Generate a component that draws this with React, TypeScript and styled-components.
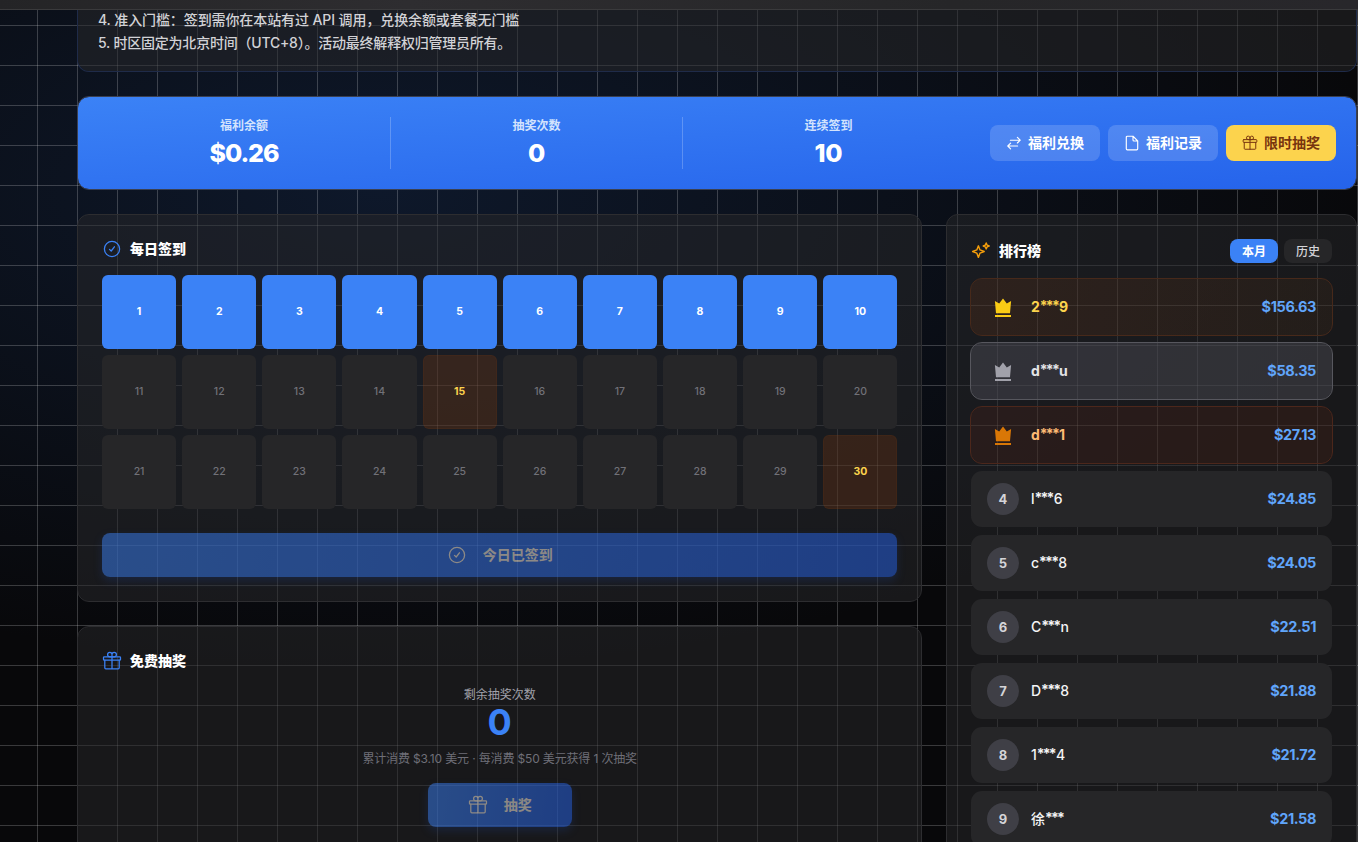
import React from "react";
import styled, { createGlobalStyle, css } from "styled-components";

const Global = createGlobalStyle`
  * { box-sizing: border-box; }
  html, body { margin: 0; height: 100%; overflow: hidden; background: #08080a; }
  body { font-family: Inter, "Noto Sans CJK SC", sans-serif; color: #fff; -webkit-font-smoothing: antialiased; }
  button { font-family: inherit; border: 0; margin: 0; }
`;

const Page = styled.div`
  width: 1358px;
  height: 842px;
  overflow: hidden;
  display: flex;
  flex-direction: column;
  background:
    linear-gradient(90deg, rgba(255, 255, 255, 0.2) 1px, transparent 1px) 37px 0 / 40px 40px,
    linear-gradient(rgba(255, 255, 255, 0.2) 1px, transparent 1px) 0 25px / 40px 40px,
    radial-gradient(ellipse 1000px 480px at 380px 190px, rgba(25, 55, 105, 0.34), transparent 100%),
    #08080a;
`;

const TopBar = styled.header`
  flex: none;
  height: 10px;
  background: linear-gradient(90deg, #242426, #2e2d30 30%, #262628 70%, #28272b);
  border-bottom: 1px solid #3a3a3c;
`;

const Content = styled.main`
  flex: none;
  width: 1280px;
  margin-left: 77px;
  display: flex;
  flex-direction: column;
  gap: 24px;
`;

const cardSurface = css`
  background: rgba(40, 40, 42, 0.53) padding-box;
  border: 1px solid #2d2d30;
  border-radius: 12px;
`;

const Notice = styled.section`
  ${cardSurface}
  height: 62px;
  border-color: #1f2b49;
  border-top: 0;
  border-radius: 0 0 12px 12px;
  padding: 0 20px;
  font-size: 14px;
  line-height: 23.2px;
  font-weight: 500;
  color: #d2d2d6;
`;

const NoticeLine = styled.div<{ $spacing: string }>`
  letter-spacing: ${(p) => p.$spacing};
  white-space: nowrap;
  &:first-child { margin-top: -2px; }
`;

const Hero = styled.section`
  height: 94px;
  border-radius: 12px;
  border: 1px solid #3a4052;
  background: linear-gradient(176deg, #3b82f6, #2563eb) padding-box;
  display: flex;
  align-items: center;
  padding: 0 20px;
`;

const Stats = styled.div`
  display: flex;
`;

const Stat = styled.div`
  flex: 0 0 292px;
  height: 52px;
  display: flex;
  flex-direction: column;
  align-items: center;
  & + & { border-left: 1px solid rgba(255, 255, 255, 0.22); }
`;

const StatLabel = styled.div`
  font-size: 12px;
  line-height: 17px;
  font-weight: 600;
  color: #d3e3fd;
`;

const StatValue = styled.div<{ $tight: boolean }>`
  font-size: 25px;
  line-height: 32px;
  font-weight: 800;
  margin-top: 3px;
  letter-spacing: ${(p) => (p.$tight ? "-1.1px" : "-0.2px")};
`;

const HeroActions = styled.div`
  display: flex;
  gap: 8px;
  margin-left: auto;
`;

const Label = styled.span`
  padding-bottom: 2px;
`;

const HeroButton = styled.button<{ $gold?: boolean }>`
  width: 110px;
  height: 36px;
  border-radius: 8px;
  padding: 0;
  display: flex;
  align-items: center;
  justify-content: center;
  gap: 6px;
  font-size: 14px;
  font-weight: 700;
  background: ${(p) => (p.$gold ? "#fcd34d" : "rgba(255, 255, 255, 0.16)")};
  color: ${(p) => (p.$gold ? "#78350f" : "#fff")};
`;

const Columns = styled.div`
  display: flex;
  justify-content: space-between;
  align-items: flex-start;
`;

const LeftColumn = styled.div`
  width: 845.4px;
  display: flex;
  flex-direction: column;
  gap: 24px;
`;

const Card = styled.section<{ $height: number }>`
  ${cardSurface}
  height: ${(p) => p.$height}px;
  padding: 24px;
  display: flex;
  flex-direction: column;
`;

const CardTitle = styled.h2`
  margin: 0;
  height: 20px;
  display: flex;
  align-items: center;
  gap: 8px;
  font-size: 14px;
  font-weight: 800;
`;

const DayGrid = styled.div`
  display: grid;
  grid-template-columns: repeat(10, 1fr);
  grid-auto-rows: 74px;
  gap: 6px;
  margin-top: 16px;
`;

type DayKind = "done" | "bonus" | "idle";

const dayStyles = {
  done: css`background: #3b82f6; color: #fff; font-weight: 700;`,
  bonus: css`background: rgba(146, 64, 14, 0.24); border: 1px solid rgba(146, 64, 14, 0.1); color: #fcd34d; font-weight: 700;`,
  idle: css`background: #262628; color: #717178;`,
};

const Day = styled.div<{ $kind: DayKind }>`
  border-radius: 6px;
  display: flex;
  align-items: center;
  justify-content: center;
  padding-bottom: 2px;
  font-size: 10.5px;
  font-weight: 500;
  ${(p) => dayStyles[p.$kind]}
`;

const ActionButton = styled.button<{ $width?: string }>`
  width: ${(p) => p.$width ?? "100%"};
  height: 44px;
  flex: none;
  border-radius: 8px;
  display: flex;
  align-items: center;
  justify-content: center;
  gap: 16px;
  padding: 0;
  font-size: 14px;
  font-weight: 700;
  color: #fff8ee;
  opacity: 0.5;
  background: linear-gradient(100deg, #3b82f6, #2563eb);
  box-shadow: 0 4px 8px rgba(37, 99, 235, 0.3);
`;

const CheckinButton = styled(ActionButton)`
  margin-top: 24px;
`;

const DrawBody = styled.div`
  display: flex;
  flex-direction: column;
  align-items: center;
  padding-top: 16px;
`;

const DrawLabel = styled.div`
  font-size: 12px;
  line-height: 16px;
  color: #a1a1aa;
`;

const DrawCount = styled.div`
  font-size: 36px;
  line-height: 39px;
  font-weight: 700;
  color: #3b82f6;
`;

const DrawHint = styled.div`
  font-size: 12px;
  line-height: 16px;
  margin: 9px 0 16px;
  color: #6f6f78;
  letter-spacing: -0.15px;
`;

const Board = styled(Card)`
  width: 411px;
  padding: 24px 23px;
`;

const BoardHead = styled.div`
  display: flex;
  align-items: center;
  justify-content: space-between;
  height: 24px;
  padding: 0 1px;
  margin-bottom: 15px;
`;

const Tabs = styled.div`
  display: flex;
  gap: 6px;
`;

const Tab = styled.button<{ $active?: boolean }>`
  width: 48px;
  height: 24px;
  padding: 0 0 2px;
  border-radius: 8px;
  font-size: 12px;
  font-weight: ${(p) => (p.$active ? 700 : 500)};
  background: ${(p) => (p.$active ? "#3b82f6" : "#262628")};
  color: ${(p) => (p.$active ? "#fff" : "#d4d4d8")};
`;

const RankList = styled.div`
  display: flex;
  flex-direction: column;
  gap: 6px;
`;

type Tone = "gold" | "silver" | "bronze" | "plain";

const toneStyles = {
  gold: css`background: linear-gradient(90deg, rgba(146, 64, 14, 0.17), rgba(146, 80, 20, 0.09)) padding-box; border-color: #47291a;`,
  silver: css`background: rgba(82, 82, 91, 0.43) padding-box; border-color: #57575e;`,
  bronze: css`background: rgba(124, 45, 18, 0.16) padding-box; border-color: #4c271b;`,
  plain: css`background: #262628 padding-box; border-color: transparent;`,
};

const nameColors = { gold: "#fcd34d", silver: "#e4e4e7", bronze: "#fdba74", plain: "#f4f4f5" };
const crownColors = { gold: "#facc15", silver: "#a1a1aa", bronze: "#d97706", plain: "" };

const RankRow = styled.div<{ $tone: Tone }>`
  height: 58px;
  flex: none;
  border-radius: 12px;
  border: 1px solid;
  padding: 0 16px;
  display: flex;
  align-items: center;
  ${(p) => toneStyles[p.$tone]}
`;

const Badge = styled.div<{ $filled: boolean }>`
  width: 32px;
  height: 32px;
  border-radius: 50%;
  display: flex;
  align-items: center;
  justify-content: center;
  font-size: 13px;
  font-weight: 700;
  color: #d4d4d8;
  background: ${(p) => (p.$filled ? "#3f3f46" : "transparent")};
`;

const RankName = styled.div<{ $tone: Tone }>`
  margin-left: 12px;
  flex: 1;
  font-size: 14px;
  line-height: 20px;
  font-weight: ${(p) => (p.$tone === "plain" ? 500 : 700)};
  color: ${(p) => nameColors[p.$tone]};
`;

const Mask = styled.span`
  letter-spacing: -1.8px;
  margin-right: 1px;
  font-weight: 700;
  line-height: 1;
  vertical-align: 1px;
`;

const Amount = styled.div`
  font-size: 14.5px;
  line-height: 20px;
  font-weight: 650;
  letter-spacing: -0.4px;
  color: #60a5fa;
`;

const Svg = styled.svg<{ $size: number; $color?: string }>`
  width: ${(p) => p.$size}px;
  height: ${(p) => p.$size}px;
  color: ${(p) => p.$color ?? "currentColor"};
  fill: none;
  stroke: currentColor;
  stroke-linecap: round;
  stroke-linejoin: round;
  flex: none;
`;

type IconProps = { size: number; color?: string };

const CheckIcon = ({ size, color }: IconProps) => (
  <Svg $size={size} $color={color} viewBox="0 0 20 20" strokeWidth="1.3">
    <circle cx="10" cy="10" r="7.6" />
    <path d="M7.5 10.4 9.2 12l3.2-4.2" />
  </Svg>
);

const GiftIcon = ({ size, color }: IconProps) => (
  <Svg $size={size} $color={color} viewBox="0 0 20 20" strokeWidth="1.25">
    <rect x="1.5" y="5.8" width="17" height="3.4" rx="0.8" />
    <path d="M2.8 9.2v7.6a1 1 0 0 0 1 1h12.4a1 1 0 0 0 1-1V9.2M10 5.8v12M10 5.8H7.7a2.2 2.2 0 1 1 2.3-2.2zM10 5.8h2.3A2.2 2.2 0 1 0 10 3.6z" />
  </Svg>
);

const SwapIcon = () => (
  <Svg $size={16} viewBox="0 0 16 16" strokeWidth="1.15">
    <path d="M4.4 5.2h9.8M11.4 2.4l2.8 2.8L11.4 8M11.6 11H1.8M4.6 8.2 1.8 11l2.8 2.8" />
  </Svg>
);

const DocIcon = () => (
  <Svg $size={16} viewBox="0 0 16 16" strokeWidth="1.15">
    <path d="M9 1.2H3.3a1 1 0 0 0-1 1v11.6a1 1 0 0 0 1 1h9.4a1 1 0 0 0 1-1V6zM9 1.2V5a1 1 0 0 0 1 1h3.7" />
  </Svg>
);

const SparkleIcon = () => (
  <Svg $size={20} $color="#f59e0b" viewBox="0 0 20 20" strokeWidth="1.4">
    <path d="M7.4 4.8 9 8.9l4.2 1.6L9 12.1l-1.6 4.3-1.6-4.3-4.2-1.6 4.2-1.6zM15.2 2l.9 2.1 2.1.9-2.1.9-.9 2.1-.9-2.1-2.1-.9 2.1-.9z" />
  </Svg>
);

const CrownIcon = ({ color }: { color: string }) => (
  <Svg $size={20} $color={color} viewBox="0 0 20 20" strokeWidth="0">
    <path fill="currentColor" d="M1.9 4 6.2 6.6 10 1.6l3.8 5L18.1 4 17 16.2H3zM2 18h16v2H2z" />
  </Svg>
);

const bonusDays = [15, 30];
const streak = 10;
const days = Array.from({ length: 30 }, (_, i) => i + 1);
const kindOf = (d: number): DayKind => (d <= streak ? "done" : bonusDays.includes(d) ? "bonus" : "idle");

const stats = [
  ["福利余额", "$0.26"],
  ["抽奖次数", "0"],
  ["连续签到", "10"],
];

const ranks: { first: string; last: string; amount: string; tone: Tone }[] = [
  { first: "2", last: "9", amount: "$156.63", tone: "gold" },
  { first: "d", last: "u", amount: "$58.35", tone: "silver" },
  { first: "d", last: "1", amount: "$27.13", tone: "bronze" },
  { first: "l", last: "6", amount: "$24.85", tone: "plain" },
  { first: "c", last: "8", amount: "$24.05", tone: "plain" },
  { first: "C", last: "n", amount: "$22.51", tone: "plain" },
  { first: "D", last: "8", amount: "$21.88", tone: "plain" },
  { first: "1", last: "4", amount: "$21.72", tone: "plain" },
  { first: "徐", last: "", amount: "$21.58", tone: "plain" },
];

export default function App() {
  return (
    <Page>
      <Global />
      <TopBar />
      <Content>
        <Notice>
          <NoticeLine $spacing="-0.1px">4. 准入门槛：签到需你在本站有过 API 调用，兑换余额或套餐无门槛</NoticeLine>
          <NoticeLine $spacing="-0.22px">5. 时区固定为北京时间（UTC+8）。活动最终解释权归管理员所有。</NoticeLine>
        </Notice>
        <Hero>
          <Stats>
            {stats.map(([label, value]) => (
              <Stat key={label}>
                <StatLabel>{label}</StatLabel>
                <StatValue $tight={value.length > 2}>{value}</StatValue>
              </Stat>
            ))}
          </Stats>
          <HeroActions>
            <HeroButton><SwapIcon /><Label>福利兑换</Label></HeroButton>
            <HeroButton><DocIcon /><Label>福利记录</Label></HeroButton>
            <HeroButton $gold><GiftIcon size={16} /><Label>限时抽奖</Label></HeroButton>
          </HeroActions>
        </Hero>
        <Columns>
          <LeftColumn>
            <Card $height={388}>
              <CardTitle><CheckIcon size={20} color="#3b82f6" /><Label>每日签到</Label></CardTitle>
              <DayGrid>
                {days.map((d) => (
                  <Day key={d} $kind={kindOf(d)}>{d}</Day>
                ))}
              </DayGrid>
              <CheckinButton><CheckIcon size={20} /><Label>今日已签到</Label></CheckinButton>
            </Card>
            <Card $height={260}>
              <CardTitle><GiftIcon size={20} color="#3b82f6" /><Label>免费抽奖</Label></CardTitle>
              <DrawBody>
                <DrawLabel>剩余抽奖次数</DrawLabel>
                <DrawCount>0</DrawCount>
                <DrawHint>累计消费 $3.10 美元 · 每消费 $50 美元获得 1 次抽奖</DrawHint>
                <ActionButton $width="144px"><GiftIcon size={20} /><Label>抽奖</Label></ActionButton>
              </DrawBody>
            </Card>
          </LeftColumn>
          <Board $height={720}>
            <BoardHead>
              <CardTitle><SparkleIcon /><Label>排行榜</Label></CardTitle>
              <Tabs>
                <Tab $active>本月</Tab>
                <Tab>历史</Tab>
              </Tabs>
            </BoardHead>
            <RankList>
              {ranks.map((r, i) => (
                <RankRow key={r.amount} $tone={r.tone}>
                  <Badge $filled={r.tone === "plain"}>
                    {r.tone === "plain" ? i + 1 : <CrownIcon color={crownColors[r.tone]} />}
                  </Badge>
                  <RankName $tone={r.tone}>{r.first}<Mask>***</Mask>{r.last}</RankName>
                  <Amount>{r.amount}</Amount>
                </RankRow>
              ))}
            </RankList>
          </Board>
        </Columns>
      </Content>
    </Page>
  );
}
